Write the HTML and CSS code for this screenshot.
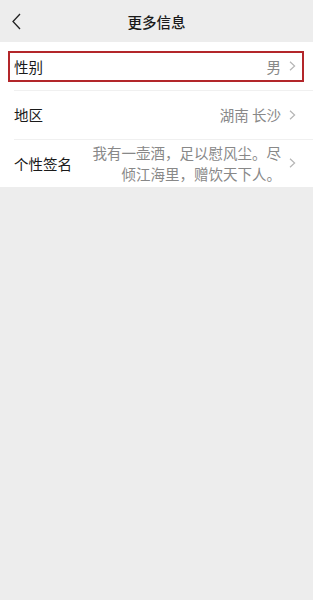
FILE: index.html
```html
<!DOCTYPE html>
<html lang="zh-CN">
<head>
    <meta charset="UTF-8">
    <meta name="viewport" content="width=device-width, initial-scale=1.0">
    <title>更多信息</title>
    <link rel="stylesheet" href="styles.css">
</head>
<body>
    <header class="topbar">
        <span class="back">
            <svg width="9" height="17" viewBox="0 0 9 17"><path d="M8 1 L1 8.5 L8 16" fill="none" stroke="#222" stroke-width="1.3"/></svg>
        </span>
        <h1>更多信息</h1>
    </header>

    <div class="list">
        <div class="row">
            <span class="label">性别</span>
            <span class="value">男</span>
            <span class="arrow"><svg width="7" height="10" viewBox="0 0 7 10"><path d="M1 0.8 L5.6 5 L1 9.2" fill="none" stroke="#b5b5b5" stroke-width="1.2"/></svg></span>
            <div class="mark"></div>
        </div>
        <div class="row">
            <span class="label">地区</span>
            <span class="value">湖南 长沙</span>
            <span class="arrow"><svg width="7" height="10" viewBox="0 0 7 10"><path d="M1 0.8 L5.6 5 L1 9.2" fill="none" stroke="#b5b5b5" stroke-width="1.2"/></svg></span>
        </div>
        <div class="row">
            <span class="label">个性签名</span>
            <span class="value multi">我有一壶酒，足以慰风尘。尽倾江海里，赠饮天下人。</span>
            <span class="arrow"><svg width="7" height="10" viewBox="0 0 7 10"><path d="M1 0.8 L5.6 5 L1 9.2" fill="none" stroke="#b5b5b5" stroke-width="1.2"/></svg></span>
        </div>
    </div>
</body>
</html>
```

FILE: styles.css
```css
*{
    margin: 0;
    padding: 0;
    box-sizing: border-box;
}
body{
    font-family: "Noto Sans CJK SC", "Noto Sans", sans-serif;
    background-color: #ededed;
    color: #191919;
    height: 100vh;
}
.topbar{
    height: 42px;
    position: relative;
    display: flex;
    align-items: center;
    justify-content: center;
}
.topbar h1{
    font-size: 14.5px;
    font-weight: 500;
    color: #1a1a1a;
}
.back{
    position: absolute;
    left: 12px;
    top: 13px;
    display: flex;
}
.list{
    background-color: #fff;
}
.row{
    position: relative;
    display: flex;
    align-items: center;
    min-height: 48px;
    padding: 0 17px 0 14px;
    font-size: 14.5px;
}
.row + .row::before{ /* linha separadora */
    content: "";
    position: absolute;
    top: 0;
    left: 14px;
    right: 0;
    height: 1px;
    background-color: #f0f0f0;
}
.row:first-child{
    min-height: 48px;
}
.row:nth-child(2){
    min-height: 49px;
}
.label{
    flex-shrink: 0;
    color: #1a1a1a;
}
.value{
    flex: 1;
    text-align: right;
    color: #888;
    margin-right: 8px;
}
.value.multi{
    margin-left: 18px;
    line-height: 21px;
    padding: 3px 0;
}
.arrow{
    display: flex;
    flex-shrink: 0;
}
.mark{
    position: absolute;
    left: 8px;
    right: 9px;
    top: 9px;
    height: 31px;
    border: 2px solid #b3262a;
}
```
